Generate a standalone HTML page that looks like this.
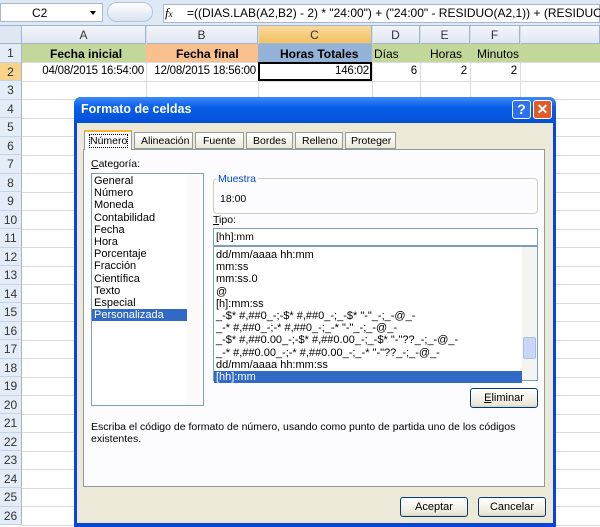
<!DOCTYPE html><html><head><style>
*{margin:0;padding:0;box-sizing:border-box}
body{width:600px;height:523px;overflow:hidden;background:#fff;font-family:"Liberation Sans",sans-serif;position:relative}
.a{position:absolute}
.t{font-size:11px;color:#000;white-space:nowrap}
.rh{position:absolute;left:0;width:22px;background:#e4ecf7;border-bottom:1px solid #c5d3e6;border-right:1px solid #9eb6ce;color:#333;font-size:12px;text-align:center;height:18.5px;line-height:18px}
.hl{position:absolute;left:22px;right:0;height:1px;background:#dadcdd}
.vl{position:absolute;top:26px;bottom:0;width:1px;background:#dadcdd}
.ch{position:absolute;top:26px;height:18px;background:linear-gradient(#f3f6fb,#dfe7f2);border-right:1px solid #9eb6ce;border-bottom:1px solid #9eb6ce;text-align:center;font-size:12px;color:#333;line-height:18px}
.btn{position:absolute;border:1px solid #003c74;border-radius:3px;background:linear-gradient(#fff,#ece9d8 85%,#d6d0c5);font-size:11px;text-align:center;line-height:18px}
.lst div{height:12.2px;line-height:12px;font-size:11px;padding-left:2px}
.r2{position:absolute;top:65px;font-size:11.5px;text-align:right;white-space:nowrap;letter-spacing:-0.2px}
</style></head><body>
<div class="a" style="left:0;top:0;width:600px;height:26px;background:#dfe8f5;border-bottom:1px solid #a0b4cf"></div>
<div class="a" style="left:0;top:3px;width:103px;height:19px;background:#fff;border:1px solid #a5b8d0"></div>
<div class="a t" style="left:32px;top:6px;font-size:12px">C2</div>
<div class="a" style="left:90px;top:11px;border:3px solid transparent;border-top:4px solid #000"></div>
<div class="a" style="left:107px;top:2px;width:46px;height:20px;border-radius:10px;background:linear-gradient(#fff,#d9e3f0);border:1px solid #b4c4d8"></div>
<div class="a" style="left:163px;top:4px;width:437px;height:19px;background:#fff;border:1px solid #a5b8d0"></div>
<div class="a" style="left:165px;top:5px;font-style:italic;font-family:'Liberation Serif';font-size:13px">f<span style="font-size:9px">x</span></div>
<div class="a t" style="left:187px;top:6px;font-size:12px">=((DIAS.LAB(A2,B2) - 2) * "24:00") + ("24:00" - RESIDUO(A2,1)) + (RESIDUO</div>
<div class="a" style="left:0;top:26px;width:22px;height:18px;background:#dfe7f2;border-right:1px solid #9eb6ce;border-bottom:1px solid #9eb6ce"></div>
<div class="ch" style="left:22px;width:124px">A</div>
<div class="ch" style="left:146px;width:112px">B</div>
<div class="ch" style="left:258px;width:114px;background:linear-gradient(#f9d99f,#f1c15f)">C</div>
<div class="ch" style="left:372px;width:48px">D</div>
<div class="ch" style="left:420px;width:50px">E</div>
<div class="ch" style="left:470px;width:50px">F</div>
<div class="ch" style="left:520px;width:80px"></div>
<div class="vl" style="left:146px"></div><div class="vl" style="left:258px"></div><div class="vl" style="left:372px"></div><div class="vl" style="left:420px"></div><div class="vl" style="left:470px"></div><div class="vl" style="left:520px"></div>
<div id="rows"></div>
<script>
var h='';for(var i=1;i<=26;i++){var y=44+(i-1)*18.5;h+='<div class="rh" style="top:'+y+'px;'+(i==2?'background:#f8d48b;':'')+'">'+i+'</div><div class="hl" style="top:'+(y+18)+'px"></div>';}
document.getElementById('rows').innerHTML=h;
</script>
<div class="a" style="left:22px;top:44px;width:124px;height:18px;background:#c4d79b"></div>
<div class="a" style="left:146px;top:44px;width:112px;height:18px;background:#fabf8f"></div>
<div class="a" style="left:258px;top:44px;width:114px;height:18px;background:#95b3d7"></div>
<div class="a" style="left:372px;top:44px;width:228px;height:18px;background:#c4d79b"></div>
<div class="a t" style="left:50px;top:47px;font-size:12px;font-weight:bold">Fecha inicial</div>
<div class="a t" style="left:176px;top:47px;font-size:12px;font-weight:bold">Fecha final</div>
<div class="a t" style="left:280px;top:47px;font-size:12px;font-weight:bold">Horas Totales</div>
<div class="a t" style="left:374px;top:47px;font-size:12px">Días</div>
<div class="a t" style="left:430px;top:47px;font-size:12px">Horas</div>
<div class="a t" style="left:477px;top:47px;font-size:12px">Minutos</div>
<div class="r2" style="right:456px">04/08/2015 16:54:00</div>
<div class="r2" style="right:344px">12/08/2015 18:56:00</div>
<div class="a" style="left:258px;top:62px;width:114px;height:19px;border:2px solid #000"></div>
<div class="r2" style="right:231px">146:02</div>
<div class="r2" style="right:183px">6</div>
<div class="r2" style="right:133px">2</div>
<div class="r2" style="right:83px">2</div>
<div class="a" style="left:74px;top:97px;width:482px;height:430px;background:#0846d8;border-radius:7px 7px 0 0"></div>
<div class="a" style="left:74px;top:97px;width:482px;height:26px;background:linear-gradient(#3d8af7,#0a5ee8 40%,#0250d8);border-radius:7px 7px 0 0"></div>
<div class="a t" style="left:81px;top:102px;color:#fff;font-weight:bold;font-size:12.5px">Formato de celdas</div>
<div class="a" style="left:512px;top:100px;width:19px;height:19px;border:1px solid #fff;border-radius:3px;background:#2c6ff0;color:#fff;font-weight:bold;font-size:14px;text-align:center;line-height:17px">?</div>
<div class="a" style="left:533px;top:100px;width:19px;height:19px;border:1px solid #fff;border-radius:3px;background:#e05a2b;color:#fff;font-weight:bold;font-size:14px;text-align:center;line-height:17px">✕</div>
<div class="a" style="left:77px;top:123px;width:476px;height:400px;background:#ece9d8"></div>
<div class="a" style="left:83px;top:149px;width:462px;height:338px;background:#fcfcfe;border:1px solid #919b9c"></div>
<div class="a" style="left:84px;top:130px;width:48px;height:20px;background:#fcfcfe;border:1px solid #919b9c;border-bottom:none;border-top:2px solid #f7b437"></div>
<div class="a t" style="left:90px;top:135px;font-size:10.5px;outline:1px dotted #000">Número</div>
<div class="a" style="left:134px;top:132px;width:59px;height:17px;background:linear-gradient(#fff,#ece9d8);border:1px solid #919b9c"></div><div class="a t" style="left:141px;top:135px;font-size:10.5px">Alineación</div>
<div class="a" style="left:195px;top:132px;width:49px;height:17px;background:linear-gradient(#fff,#ece9d8);border:1px solid #919b9c"></div><div class="a t" style="left:203px;top:135px;font-size:10.5px">Fuente</div>
<div class="a" style="left:246px;top:132px;width:47px;height:17px;background:linear-gradient(#fff,#ece9d8);border:1px solid #919b9c"></div><div class="a t" style="left:253px;top:135px;font-size:10.5px">Bordes</div>
<div class="a" style="left:295px;top:132px;width:48px;height:17px;background:linear-gradient(#fff,#ece9d8);border:1px solid #919b9c"></div><div class="a t" style="left:302px;top:135px;font-size:10.5px">Relleno</div>
<div class="a" style="left:345px;top:132px;width:51px;height:17px;background:linear-gradient(#fff,#ece9d8);border:1px solid #919b9c"></div><div class="a t" style="left:351px;top:135px;font-size:10.5px">Proteger</div>
<div class="a t" style="left:91px;top:158px;font-size:10.5px"><u>C</u>ategoría:</div>
<div class="a" style="left:91px;top:173px;width:113px;height:233px;background:#fff;border:1px solid #7f9db9"></div>
<div class="a" style="left:187px;top:174px;width:16px;height:231px;background:#fbfbf9"></div>
<div class="a lst" style="left:92px;top:175px;width:95px">
<div>General</div><div>Número</div><div>Moneda</div><div>Contabilidad</div><div>Fecha</div><div>Hora</div><div>Porcentaje</div><div>Fracción</div><div>Científica</div><div>Texto</div><div>Especial</div><div style="background:#316ac5;color:#fff">Personalizada</div></div>
<div class="a" style="left:213px;top:178px;width:325px;height:36px;border:1px solid #d0d0bf;border-radius:4px"></div>
<div class="a t" style="left:216px;top:173px;font-size:10.5px;color:#0046d5;background:#fcfcfe;padding:0 2px">Muestra</div>
<div class="a t" style="left:220px;top:193px;font-size:10.5px">18:00</div>
<div class="a t" style="left:213px;top:214px;font-size:10.5px"><u>T</u>ipo:</div>
<div class="a" style="left:213px;top:228px;width:325px;height:18px;background:#fff;border:1px solid #7f9db9"></div>
<div class="a t" style="left:216px;top:231px;font-size:10.5px">[hh]:mm</div>
<div class="a" style="left:213px;top:246px;width:325px;height:135px;background:#fff;border:1px solid #7f9db9"></div>
<div class="a" style="left:522px;top:247px;width:15px;height:133px;background:#f4f4f0"></div>
<div class="a" style="left:523px;top:337px;width:13px;height:22px;background:#c8d6f8;border:1px solid #a9bdea;border-radius:2px"></div>
<div class="a lst" style="left:214px;top:249px;width:308px">
<div>dd/mm/aaaa hh:mm</div><div>mm:ss</div><div>mm:ss.0</div><div>@</div><div>[h]:mm:ss</div>
<div>_-$* #,##0_-;-$* #,##0_-;_-$* "-"_-;_-@_-</div>
<div>_-* #,##0_-;-* #,##0_-;_-* "-"_-;_-@_-</div>
<div>_-$* #,##0.00_-;-$* #,##0.00_-;_-$* "-"??_-;_-@_-</div>
<div>_-* #,##0.00_-;-* #,##0.00_-;_-* "-"??_-;_-@_-</div>
<div>dd/mm/aaaa hh:mm:ss</div>
<div style="background:#316ac5;color:#fff">[hh]:mm</div></div>
<div class="btn" style="left:470px;top:388px;width:68px;height:20px"><u>E</u>liminar</div>
<div class="a t" style="left:91px;top:421px;font-size:10.5px;line-height:12px">Escriba el código de formato de número, usando como punto de partida uno de los códigos<br>existentes.</div>
<div class="btn" style="left:400px;top:497px;width:68px;height:20px">Aceptar</div>
<div class="btn" style="left:478px;top:497px;width:68px;height:20px">Cancelar</div>
</body></html>
